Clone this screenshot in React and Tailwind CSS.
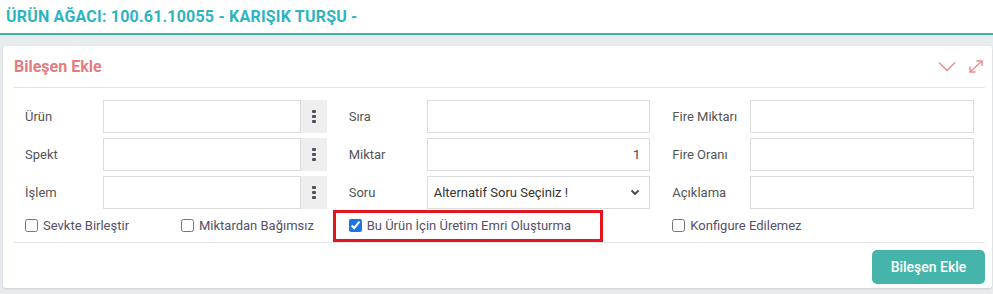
import React from "react";

const Kebab = () => (
  <div className="flex flex-col items-center gap-[2px]">
    <span className="w-[4px] h-[3px] rounded-[1px] bg-[#4b5260]" />
    <span className="w-[4px] h-[3px] rounded-[1px] bg-[#4b5260]" />
    <span className="w-[4px] h-[3px] rounded-[1px] bg-[#4b5260]" />
  </div>
);

const Field = ({ label, children }) => (
  <div className="flex items-center h-[33px]">
    <label className="w-[78px] shrink-0 text-[13px] text-[#555]">{label}</label>
    {children}
  </div>
);

const TextBox = ({ value = "", right = false }) => (
  <div
    className={
      "flex-1 h-[33px] border border-[#dcdcdc] bg-white flex items-center px-[9px] text-[13px] text-[#444] " +
      (right ? "justify-end" : "")
    }
  >
    {value}
  </div>
);

const LookupBox = () => (
  <div className="flex-1 flex h-[33px]">
    <div className="flex-1 border border-[#dcdcdc] bg-white" />
    <div className="w-[26px] bg-[#eeeeee] flex items-center justify-center">
      <Kebab />
    </div>
  </div>
);

const Check = ({ label, checked = false }) => (
  <label className="flex items-center gap-[5px] text-[13px] text-[#55506a]">
    <input
      type="checkbox"
      defaultChecked={checked}
      className="w-[13px] h-[13px] m-0 accent-[#1a73e8]"
    />
    {label}
  </label>
);

export default function App() {
  return (
    <div className="w-full h-[294px] overflow-hidden bg-[#e9ecef] font-['Roboto',sans-serif]">
      <div className="h-[35px] bg-white border-b-2 border-[#3db5a3] px-[6px] flex items-center">
        <h1 className="text-[16px] font-bold text-[#2db4bf] tracking-[0.2px]">
          ÜRÜN AĞACI: 100.61.10055 - KARIŞIK TURŞU -
        </h1>
      </div>

      <div className="pt-[11px] pl-[3px] pr-[1px]">
        <div className="bg-white rounded-[3px] pl-[11px] pr-[7px] pb-[4px] shadow-sm">
          <div className="h-[42px] flex items-center justify-between border-b border-[#e3e3e3]">
            <h2 className="text-[16px] font-bold text-[#e47d80]">Bileşen Ekle</h2>
            <div className="flex items-center gap-[13px] pr-[2px]">
              <svg width="18" height="11" viewBox="0 0 18 11" fill="none">
                <path d="M1 1.5 L9 9.5 L17 1.5" stroke="#ec8a8c" strokeWidth="1.4" />
              </svg>
              <svg width="14" height="13" viewBox="0 0 14 13" fill="none">
                <path d="M1.5 11.5 L12.5 1.5" stroke="#ec8a8c" strokeWidth="1.4" />
                <path d="M7.5 1 L13 1 L13 6" stroke="#ec8a8c" strokeWidth="1.4" />
                <path d="M1 6.5 L1 12 L6.5 12" stroke="#ec8a8c" strokeWidth="1.4" />
              </svg>
            </div>
          </div>

          <div className="grid grid-cols-3 pt-[12px] border-b border-[#e3e3e3]">
            <div className="px-[11px] flex flex-col gap-[5px]">
              <Field label="Ürün"><LookupBox /></Field>
              <Field label="Spekt"><LookupBox /></Field>
              <Field label="İşlem"><LookupBox /></Field>
            </div>
            <div className="px-[11px] flex flex-col gap-[5px]">
              <Field label="Sıra"><TextBox /></Field>
              <Field label="Miktar"><TextBox value="1" right /></Field>
              <Field label="Soru">
                <div className="flex-1 h-[33px] border border-[#dcdcdc] bg-white flex items-center justify-between pl-[6px] pr-[9px] text-[13px] text-[#333]">
                  <span>Alternatif Soru Seçiniz !</span>
                  <svg width="10" height="7" viewBox="0 0 10 7" fill="none">
                    <path d="M1.5 1.5 L5 5 L8.5 1.5" stroke="#444" strokeWidth="1.8" />
                  </svg>
                </div>
              </Field>
            </div>
            <div className="px-[11px] flex flex-col gap-[5px]">
              <Field label="Fire Miktarı"><TextBox /></Field>
              <Field label="Fire Oranı"><TextBox /></Field>
              <Field label="Açıklama"><TextBox /></Field>
            </div>

            <div className="px-[11px] h-[33px] flex items-center">
              <div className="w-[156px]">
                <Check label="Sevkte Birleştir" />
              </div>
              <Check label="Miktardan Bağımsız" />
            </div>
            <div className="px-[11px] h-[33px] flex items-center relative">
              <Check label="Bu Ürün İçin Üretim Emri Oluşturma" checked />
              <div className="absolute left-[-5px] top-[1px] w-[270px] h-[32px] border-[3px] border-[#e3151f]" />
            </div>
            <div className="px-[11px] h-[33px] flex items-center">
              <Check label="Konfigure Edilemez" />
            </div>
          </div>

          <div className="flex justify-end pt-[7px]">
            <button className="w-[113px] h-[34px] rounded-[5px] bg-[#45b5ab] text-white text-[14px] font-medium">
              Bileşen Ekle
            </button>
          </div>
        </div>
      </div>
    </div>
  );
}
